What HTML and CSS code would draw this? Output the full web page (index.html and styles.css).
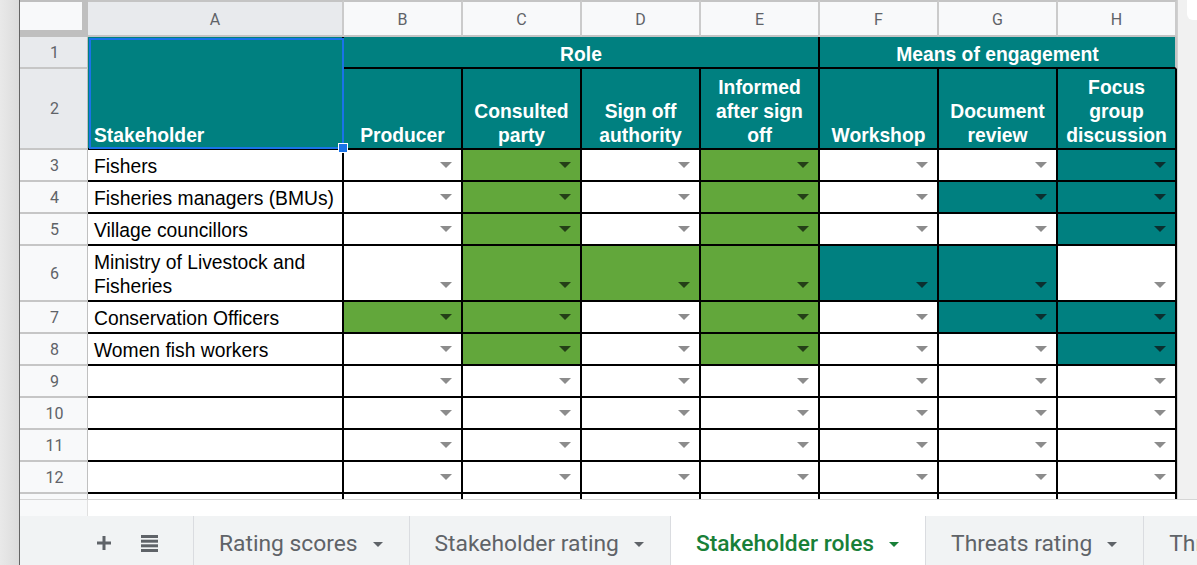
FILE: index.html
```html
<!DOCTYPE html>
<html>
<head>
<meta charset="utf-8">
<link rel="stylesheet" href="styles.css">
</head>
<body>
<div class="app">
  <div class="edge"></div>
  <div class="main">
    <div class="sheet">
      <div class="corner"><div class="corner-in"></div></div>
      <div class="colhead sel">A</div>
      <div class="colhead">B</div>
      <div class="colhead">C</div>
      <div class="colhead">D</div>
      <div class="colhead">E</div>
      <div class="colhead">F</div>
      <div class="colhead">G</div>
      <div class="colhead">H</div>
      <div class="gutter"><div class="thumb"></div></div>

      <div class="rowhead sel">1</div>
      <div class="hcell stake">Stakeholder</div>
      <div class="hcell group role">Role</div>
      <div class="hcell group means">Means of engagement</div>

      <div class="rowhead sel">2</div>
      <div class="hcell">Producer</div>
      <div class="hcell">Consulted party</div>
      <div class="hcell">Sign off authority</div>
      <div class="hcell">Informed after sign off</div>
      <div class="hcell">Workshop</div>
      <div class="hcell">Document review</div>
      <div class="hcell">Focus group discussion</div>

      <div class="rowhead">3</div>
      <div class="name">Fishers</div>
      <div class="dd"></div><div class="dd green"></div><div class="dd"></div><div class="dd green"></div><div class="dd"></div><div class="dd"></div><div class="dd teal"></div>

      <div class="rowhead">4</div>
      <div class="name">Fisheries managers (BMUs)</div>
      <div class="dd"></div><div class="dd green"></div><div class="dd"></div><div class="dd green"></div><div class="dd"></div><div class="dd teal"></div><div class="dd teal"></div>

      <div class="rowhead">5</div>
      <div class="name">Village councillors</div>
      <div class="dd"></div><div class="dd green"></div><div class="dd"></div><div class="dd green"></div><div class="dd"></div><div class="dd"></div><div class="dd teal"></div>

      <div class="rowhead">6</div>
      <div class="name">Ministry of Livestock and Fisheries</div>
      <div class="dd"></div><div class="dd green"></div><div class="dd green"></div><div class="dd green"></div><div class="dd teal"></div><div class="dd teal"></div><div class="dd"></div>

      <div class="rowhead">7</div>
      <div class="name">Conservation Officers</div>
      <div class="dd green"></div><div class="dd green"></div><div class="dd"></div><div class="dd green"></div><div class="dd"></div><div class="dd teal"></div><div class="dd teal"></div>

      <div class="rowhead">8</div>
      <div class="name">Women fish workers</div>
      <div class="dd"></div><div class="dd green"></div><div class="dd"></div><div class="dd green"></div><div class="dd"></div><div class="dd"></div><div class="dd teal"></div>

      <div class="rowhead">9</div>
      <div class="name"></div>
      <div class="dd"></div><div class="dd"></div><div class="dd"></div><div class="dd"></div><div class="dd"></div><div class="dd"></div><div class="dd"></div>

      <div class="rowhead">10</div>
      <div class="name"></div>
      <div class="dd"></div><div class="dd"></div><div class="dd"></div><div class="dd"></div><div class="dd"></div><div class="dd"></div><div class="dd"></div>

      <div class="rowhead">11</div>
      <div class="name"></div>
      <div class="dd"></div><div class="dd"></div><div class="dd"></div><div class="dd"></div><div class="dd"></div><div class="dd"></div><div class="dd"></div>

      <div class="rowhead">12</div>
      <div class="name"></div>
      <div class="dd"></div><div class="dd"></div><div class="dd"></div><div class="dd"></div><div class="dd"></div><div class="dd"></div><div class="dd"></div>

      <div class="rowhead"></div>
      <div class="name"></div>
      <div class="dd"></div><div class="dd"></div><div class="dd"></div><div class="dd"></div><div class="dd"></div><div class="dd"></div><div class="dd"></div>

      <div class="selection"><span class="handle"></span></div>
    </div>

    <div class="hscroll"><div class="hs-left"></div><div class="hs-right"></div></div>

    <div class="tabbar">
      <div class="tools">
        <svg class="ico" width="16" height="16" viewBox="0 0 16 16"><path d="M8 1v14M1 8h14" stroke="#5f6368" stroke-width="3" fill="none"/></svg>
        <svg class="ico" width="17" height="17" viewBox="0 0 17 17"><rect x="0" y="0" width="17" height="3" fill="#5f6368"/><rect x="0" y="4.7" width="17" height="3" fill="#5f6368"/><rect x="0" y="9.3" width="17" height="3" fill="#5f6368"/><rect x="0" y="14" width="17" height="3" fill="#5f6368"/></svg>
      </div>
      <div class="tab">Rating scores<span class="caret"></span></div>
      <div class="tab">Stakeholder rating<span class="caret"></span></div>
      <div class="tab active">Stakeholder roles<span class="caret"></span></div>
      <div class="tab">Threats rating<span class="caret"></span></div>
      <div class="tab">Threats summary<span class="caret"></span></div>
    </div>
  </div>
</div>
</body>
</html>
```

FILE: styles.css
```css
* { box-sizing: border-box; }
html, body { margin: 0; padding: 0; }
body {
  width: 1197px;
  height: 565px;
  overflow: hidden;
  background: #ffffff;
  font-family: "Liberation Sans", Arial, sans-serif;
}
.app {
  display: flex;
  width: 1197px;
  height: 565px;
}
.edge {
  width: 20px;
  flex: none;
  background: linear-gradient(to right, #e9e9e9, #dcdcdc);
  border-right: 1px solid #646464;
}
.main {
  width: 1177px;
  display: flex;
  flex-direction: column;
}
.sheet {
  position: relative;
  height: 500px;
  overflow: hidden;
  border-bottom: 1px solid #d6d6d6;
  display: grid;
  grid-template-columns: 68px 256px repeat(7, 119px) 20px;
  grid-template-rows: 37px 32px 81px 32px 32px 32px 56px 32px 32px 32px 32px 32px 32px 32px;
  flex: none;
}
.corner {
  background: #bfbfbf;
  padding-top: 2px;
}
.corner-in {
  width: 62px;
  height: 28px;
  background: #f8f9fa;
}
.colhead {
  background: #f8f9fa;
  border-top: 2px solid #c4c4c4;
  border-bottom: 2px solid #c4c4c4;
  border-right: 2px solid #cbcbcb;
  display: flex;
  align-items: center;
  justify-content: center;
  font-family: Roboto, "Liberation Sans", Arial, sans-serif;
  font-size: 16px;
  color: #5f6368;
  padding-top: 1px;
}
.colhead.sel { background: #e8eaed; }
.gutter {
  grid-column: 10;
  grid-row: 1 / -1;
  background: #f1f1f1;
  border-left: 1px solid #d0d0d0;
  position: relative;
}
.thumb {
  position: absolute;
  right: 0;
  top: 0;
  width: 10px;
  height: 20px;
  background: #ffffff;
  border-bottom-left-radius: 6px;
}
.rowhead {
  background: #f8f9fa;
  border-right: 1px solid #c0c0c0;
  border-bottom: 2px solid #c6c6c6;
  display: flex;
  align-items: center;
  justify-content: center;
  font-family: Roboto, "Liberation Sans", Arial, sans-serif;
  font-size: 16px;
  color: #5f6368;
  padding-left: 2px;
}
.rowhead.sel { background: #e8eaed; }
.hcell {
  background: #008080;
  color: #ffffff;
  font-weight: bold;
  font-size: 19.3px;
  line-height: 24px;
  text-align: center;
  border-right: 2px solid #000;
  border-bottom: 2px solid #000;
  display: flex;
  align-items: flex-end;
  justify-content: center;
  padding: 0 3px 0;
}
.hcell.stake {
  grid-row: span 2;
  justify-content: flex-start;
  text-align: left;
  padding-left: 6px;
}
.hcell.role { grid-column: span 4; padding-bottom: 0; }
.hcell.means {
  grid-column: span 3;
  padding-bottom: 0;
  border-right-color: #c4c4c4;
}
.name {
  background: #ffffff;
  color: #000;
  font-size: 19.3px;
  line-height: 24px;
  border-right: 2px solid #000;
  border-bottom: 2px solid #000;
  display: flex;
  align-items: flex-end;
  padding: 0 3px 1px 6px;
}
.dd {
  background: #ffffff;
  border-right: 2px solid #000;
  border-bottom: 2px solid #000;
  display: flex;
  justify-content: flex-end;
  align-items: flex-end;
}
.dd::after {
  content: "";
  width: 0;
  height: 0;
  border-left: 6px solid transparent;
  border-right: 6px solid transparent;
  border-top: 6px solid #8c8c8c;
  margin: 0 9px 12px 0;
}
.dd.green { background: #62a73b; }
.dd.teal { background: #008080; }
.dd.green::after { border-top-color: #243f17; }
.dd.teal::after { border-top-color: #0b2f2f; }
.selection {
  position: absolute;
  left: 69px;
  top: 38px;
  width: 255px;
  height: 111px;
  border: 2px solid #1a73e8;
  pointer-events: none;
}
.handle {
  position: absolute;
  right: -6px;
  bottom: -6px;
  width: 10px;
  height: 10px;
  background: #1a73e8;
  border: 1px solid #ffffff;
}
.hscroll {
  height: 16px;
  display: flex;
  flex: none;
}
.hs-left {
  width: 68px;
  background: #f8f9fa;
  border-right: 1px solid #e0e0e0;
}
.hs-right {
  flex: 1;
  background: #ffffff;
}
.tabbar {
  height: 49px;
  flex: none;
  display: flex;
  background: #f1f3f4;
  overflow: hidden;
  font-family: Roboto, "Liberation Sans", Arial, sans-serif;
  font-size: 22.8px;
  color: #5f6368;
}
.tools {
  width: 174px;
  flex: none;
  display: flex;
  align-items: center;
  gap: 29px;
  padding-left: 76px;
  padding-top: 5px;
  border-right: 1px solid #dadce0;
}
.ico { display: block; }
.tab {
  flex: none;
  display: flex;
  align-items: center;
  gap: 15px;
  padding: 6px 26px 0 25px;
  border-right: 1px solid #dadce0;
  white-space: nowrap;
}
.tab.active {
  background: #ffffff;
  color: #188038;
  font-weight: 500;
}
.caret {
  width: 0;
  height: 0;
  border-left: 5px solid transparent;
  border-right: 5px solid transparent;
  border-top: 5px solid currentColor;
  margin-top: 2px;
}
```
